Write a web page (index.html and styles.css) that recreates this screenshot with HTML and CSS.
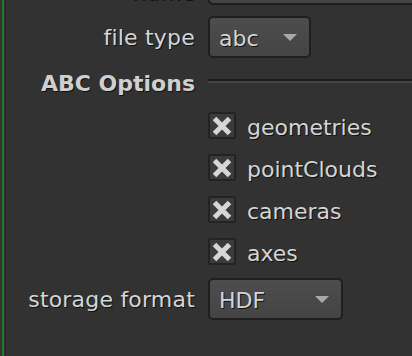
FILE: index.html
```html
<!DOCTYPE html>
<html lang="en">
<head>
    <meta charset="UTF-8">
    <title>Write - ABC Options</title>
    <link rel="stylesheet" href="styles.css">
</head>
<body>
    <div class="panel">
        <div class="panel-inner">
            <div class="row row-name">
                <div class="label label-low">name</div>
                <div class="field-wide"></div>
            </div>

            <div class="row row-filetype">
                <div class="label">file type</div>
                <div class="select select-short">
                    <span>abc</span>
                    <span class="arrow"></span>
                </div>
            </div>

            <div class="row section">
                <div class="label section-title">ABC Options</div>
                <div class="divider"></div>
            </div>

            <div class="row check-row">
                <div class="label"></div>
                <div class="checkbox">
                    <svg width="24" height="23" viewBox="0 0 24 23"><path d="M4.5 4.5 L19.5 19.5 M19.5 4.5 L4.5 19.5" stroke="#d6d6d6" stroke-width="5"/></svg>
                </div>
                <span class="check-label">geometries</span>
            </div>
            <div class="row check-row">
                <div class="label"></div>
                <div class="checkbox">
                    <svg width="24" height="23" viewBox="0 0 24 23"><path d="M4.5 4.5 L19.5 19.5 M19.5 4.5 L4.5 19.5" stroke="#d6d6d6" stroke-width="5"/></svg>
                </div>
                <span class="check-label">pointClouds</span>
            </div>
            <div class="row check-row">
                <div class="label"></div>
                <div class="checkbox">
                    <svg width="24" height="23" viewBox="0 0 24 23"><path d="M4.5 4.5 L19.5 19.5 M19.5 4.5 L4.5 19.5" stroke="#d6d6d6" stroke-width="5"/></svg>
                </div>
                <span class="check-label">cameras</span>
            </div>
            <div class="row check-row">
                <div class="label"></div>
                <div class="checkbox">
                    <svg width="24" height="23" viewBox="0 0 24 23"><path d="M4.5 4.5 L19.5 19.5 M19.5 4.5 L4.5 19.5" stroke="#d6d6d6" stroke-width="5"/></svg>
                </div>
                <span class="check-label">axes</span>
            </div>

            <div class="row row-storage">
                <div class="label">storage format</div>
                <div class="select select-long">
                    <span>HDF</span>
                    <span class="arrow"></span>
                </div>
            </div>
        </div>
    </div>
</body>
</html>
```

FILE: styles.css
```css
* {
    margin: 0;
    padding: 0;
    box-sizing: border-box;
}

body {
    font-family: 'DejaVu Sans', Verdana, sans-serif;
    font-size: 22px;
    color: #d4d5d6;
    background: #323232;
    height: 100vh;
    overflow: hidden;
}

.panel {
    display: flow-root;
    margin-left: 2px;
    border-left: 2px solid #1d7a22;
    height: 100%;
}

.panel-inner {
    display: flow-root;
    margin-left: 1px;
    border-left: 1px solid #262626;
    height: 100%;
}

.row {
    display: flex;
    align-items: center;
}

.label {
    width: 189px;
    flex-shrink: 0;
    margin-right: 13px;
    text-align: right;
    line-height: 42px;
    padding-top: 2px;
    letter-spacing: 0.2px;
    white-space: nowrap;
    text-shadow: 1px 1px 0 #111;
}

/* rows */
.row-name {
    margin-top: -37px;
    height: 42px;
}

.label-low {
    align-self: flex-end;
    line-height: 26px;
    padding-top: 0;
    margin-bottom: -1px;
}

.row-filetype {
    margin-top: 10px;
}

.section {
    margin-top: 12px;
    height: 26px;
    align-items: flex-start;
}

.section-title {
    font-weight: bold;
    line-height: 26px;
    padding-top: 0;
    letter-spacing: 0;
    color: #cfcfcf;
}

.divider {
    flex: 1;
    margin-top: 8px;
    height: 4px;
    border-top: 2px solid #1c1c1c;
    border-bottom: 2px solid #444;
}

.check-row {
    margin-top: 15px;
    height: 27px;
}

.row-storage {
    margin-top: 12px;
}

/* widgets */
.field-wide {
    flex: 1;
    height: 42px;
    margin-right: -6px;
    border: 2px solid #1e1e1e;
    border-radius: 5px;
    background: #444;
}

.select {
    height: 42px;
    display: flex;
    align-items: center;
    padding: 2px 12px 0 9px;
    border: 2px solid #1f1f1f;
    border-radius: 5px;
    background: linear-gradient(#4d4d4d, #444);
    text-shadow: 1px 1px 0 #111;
}

.select-short {
    width: 103px;
}

.select-long {
    width: 135px;
}

.arrow {
    margin-left: auto;
    margin-top: -2px;
    width: 0;
    height: 0;
    border-left: 7.5px solid transparent;
    border-right: 7.5px solid transparent;
    border-top: 7px solid #a9a9a9;
}

.checkbox {
    width: 28px;
    height: 27px;
    border: 2px solid #232323;
    border-radius: 2px;
    background: #3b3b3b;
    flex-shrink: 0;
}

.checkbox svg {
    display: block;
}

.check-label {
    margin-left: 11px;
    line-height: 27px;
    padding-top: 3px;
    text-shadow: 1px 1px 0 #111;
}
```
